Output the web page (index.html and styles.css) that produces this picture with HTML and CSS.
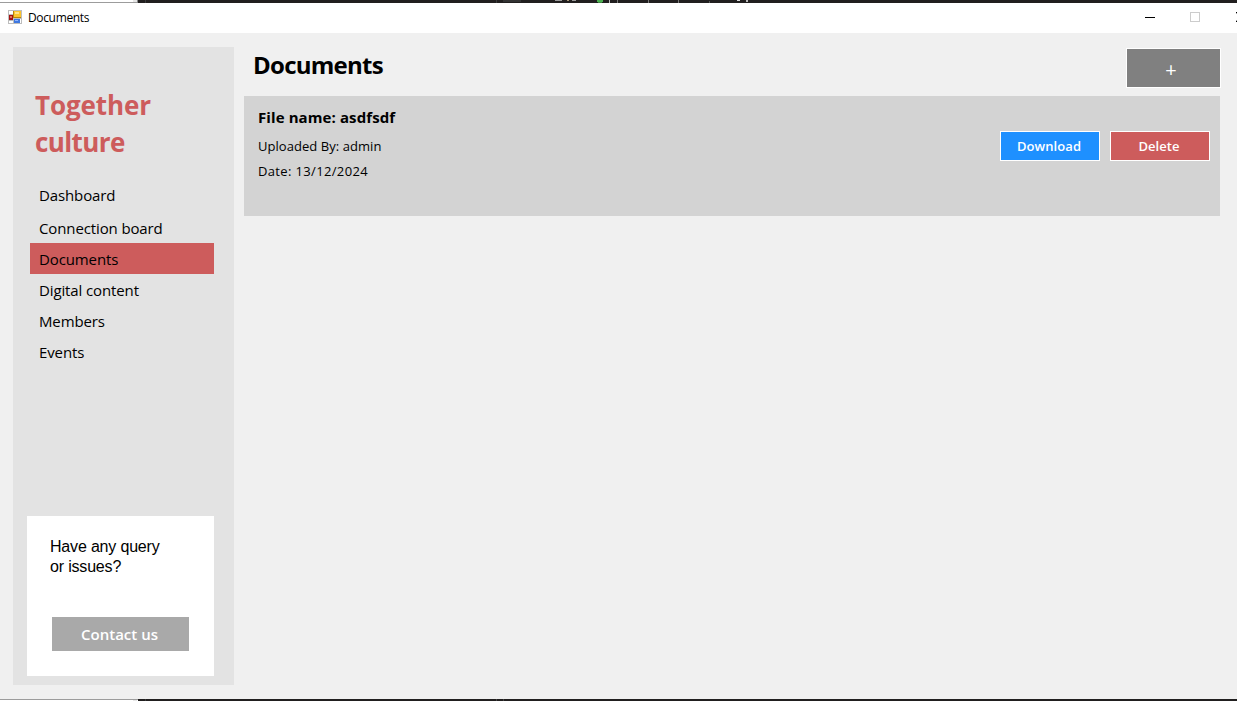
FILE: index.html
```html
<!DOCTYPE html>
<html lang="en">
<head>
<meta charset="utf-8">
<title>Documents</title>
<link rel="stylesheet" href="styles.css">
</head>
<body>
<div class="desktop">
  <svg class="strip" width="1237" height="3" shape-rendering="crispEdges">
    <rect width="1237" height="3" fill="#fff"/>
    <rect y="2" width="138" height="1" fill="#9c9c9c"/>
    <rect x="133" width="4" height="2" fill="#e6e6e6"/>
    <rect x="137" width="1" height="3" fill="#8a8a8a"/>
    <rect x="138" width="1099" height="3" fill="#211f1f"/>
    <rect x="145" width="1" height="3" fill="#3a3a3a"/>
    <rect x="496" width="1" height="3" fill="#3a3a3a"/>
    <rect x="503" width="18" height="2" fill="#333"/>
    <rect x="555" width="7" height="1" fill="#999"/>
    <rect x="567" width="2" height="1" fill="#a89878"/>
    <rect x="572" width="4" height="1" fill="#999"/>
    <rect x="597" width="6" height="2" fill="#4caf50"/>
    <rect x="598" y="2" width="4" height="1" fill="#3b8a3f"/>
    <rect x="609" width="1" height="3" fill="#bbb"/>
    <rect x="617" width="1" height="3" fill="#777"/>
    <rect x="648" width="1" height="3" fill="#777"/>
    <rect x="678" width="1" height="3" fill="#777"/>
    <rect x="709" y="1" width="1" height="2" fill="#555"/>
    <rect x="737" width="3" height="1" fill="#ddd"/>
    <rect x="746" width="2" height="2" fill="#bbb"/>
  </svg>
  <header class="titlebar">
    <svg class="app-icon" width="14" height="14" shape-rendering="crispEdges">
      <rect width="14" height="14" fill="#bdbdbd"/>
      <path d="M1 1h4v3H1zM1 11h4v2H1zM12 9h1v4h-1z" fill="#fff"/>
      <rect x="5" y="1" width="8" height="7" fill="#b8860b"/>
      <rect x="6" y="1" width="7" height="6" fill="#fcc52c"/>
      <rect x="7" y="2" width="4" height="2" fill="#ffe48a"/>
      <rect x="1" y="5" width="4" height="5" fill="#a31212"/>
      <rect x="2" y="6" width="2" height="2" fill="#e06a5a"/>
      <rect x="6" y="9" width="6" height="4" fill="#3f78e0"/>
      <rect x="7" y="10" width="3" height="1" fill="#8fb4ff"/>
    </svg>
    <span class="window-title">Documents</span>
    <svg class="controls" width="93" height="12" shape-rendering="crispEdges">
      <rect x="1" y="5" width="10" height="1" fill="#000"/>
      <rect x="46.5" y=".5" width="9" height="9" fill="none" stroke="#ccc"/>
      <path d="M92 0h1v1h-1zM92 9h1v1h-1z" fill="#000"/>
      <path d="M92 1h1v1h-1zM92 8h1v1h-1z" fill="#aaa"/>
    </svg>
  </header>
  <div class="window">
    <aside class="sidebar">
      <h2 class="brand">Together<br><span class="brand-second">culture</span></h2>
      <nav class="menu">
        <a class="item first">Dashboard</a>
        <a class="item">Connection board</a>
        <a class="item active">Documents</a>
        <a class="item">Digital content</a>
        <a class="item">Members</a>
        <a class="item">Events</a>
      </nav>
      <section class="help">
        <p class="question">Have any query<br>or issues?</p>
        <button class="contact">Contact us</button>
      </section>
    </aside>
    <main class="content">
      <div class="heading">
        <h1 class="title">Documents</h1>
        <button class="add">+</button>
      </div>
      <article class="card">
        <div class="details">
          <h3 class="name">File name: asdfsdf</h3>
          <p class="meta">Uploaded By: admin</p>
          <p class="meta date">Date: 13/12/2024</p>
        </div>
        <div class="actions">
          <button class="btn download">Download</button>
          <button class="btn delete">Delete</button>
        </div>
      </article>
    </main>
  </div>
  <svg class="strip" width="1237" height="2" shape-rendering="crispEdges">
    <rect width="1237" height="2" fill="#fff"/>
    <rect width="138" height="1" fill="#9c9c9c"/>
    <rect x="133" y="1" width="4" height="1" fill="#e6e6e6"/>
    <rect x="138" width="1099" height="2" fill="#211f1f"/>
    <rect x="145" width="1" height="2" fill="#3a3a3a"/>
    <rect x="496" width="1" height="2" fill="#444"/>
    <rect x="503" width="1" height="2" fill="#444"/>
  </svg>
</div>
</body>
</html>
```
FILE: styles.css
```css
* { box-sizing: border-box; }
body, h1, h2, h3, p { margin: 0; }
body {
  width: 1237px;
  height: 701px;
  overflow: hidden;
  font-family: "Open Sans", "Noto Sans", sans-serif;
  color: #000;
}
button { font-family: inherit; padding: 0; margin: 0; border: 0; color: #fff; }
.desktop { display: flex; flex-direction: column; height: 701px; }
.strip { display: block; flex: none; }
.titlebar {
  display: flex;
  align-items: flex-start;
  height: 30px;
  padding: 7px 0 0 8px;
  background: #fff;
}
.app-icon { display: block; }
.window-title { margin-left: 6px; font-size: 12px; line-height: 16px; letter-spacing: -0.35px; }
.controls { display: block; margin: 2px 0 0 auto; }
.window {
  display: flex;
  gap: 10px;
  height: 666px;
  padding: 14px 17px 14px 13px;
  background: #f0f0f0;
}
.sidebar {
  display: flex;
  flex-direction: column;
  width: 221px;
  height: 638px;
  padding: 40px 20px 9px 14px;
  background: #e3e3e3;
}
.brand {
  margin-left: 8px;
  color: #cd5c5c;
  font-size: 26px;
  line-height: 37px;
  font-weight: 700;
  letter-spacing: -0.1px;
}
.brand-second { letter-spacing: -0.6px; }
.menu { display: flex; flex-direction: column; margin: 18px 0 0 3px; }
.item {
  display: block;
  height: 31px;
  padding-left: 9px;
  font-size: 15px;
  line-height: 32px;
  letter-spacing: -0.12px;
  white-space: nowrap;
}
.first { height: 33px; }
.active { background: #cd5c5c; }
.help { height: 160px; margin-top: auto; padding: 21px 23px 0; background: #fff; }
.question {
  font-family: "Liberation Sans", Arial, sans-serif;
  font-size: 16px;
  line-height: 20px;
  letter-spacing: -0.18px;
  white-space: nowrap;
}
.contact {
  display: block;
  width: 137px;
  height: 34px;
  margin: 40px 0 0 2px;
  padding-right: 2px;
  background: #a9a9a9;
  font-size: 15px;
  font-weight: 600;
}
.content { flex: 1; }
.heading { display: flex; justify-content: space-between; height: 49px; padding: 1px 0 0 9px; }
.title { font-size: 24px; line-height: 33px; font-weight: 700; letter-spacing: -0.75px; }
.add {
  width: 95px;
  height: 40px;
  margin-right: -1px;
  padding: 4px 5px 0 0;
  border: 1px solid #fff;
  background: #808080;
  font-size: 20px;
  line-height: 34px;
}
.card {
  display: flex;
  justify-content: space-between;
  width: 976px;
  height: 120px;
  padding: 10px 10px 0 14px;
  background: #d3d3d3;
}
.name { font-size: 15px; line-height: 22px; font-weight: 700; letter-spacing: 0.1px; }
.meta { margin-top: 6px; font-size: 13px; line-height: 24px; letter-spacing: 0.05px; }
.date { margin-top: 1px; letter-spacing: 0.35px; }
.actions { display: flex; gap: 10px; padding-top: 25px; }
.btn { width: 100px; height: 30px; padding-right: 2px; border: 1px solid #fff; font-size: 13px; font-weight: 600; letter-spacing: 0.08px; }
.download { background: #1e90ff; }
.delete { background: #cd5c5c; }
```
